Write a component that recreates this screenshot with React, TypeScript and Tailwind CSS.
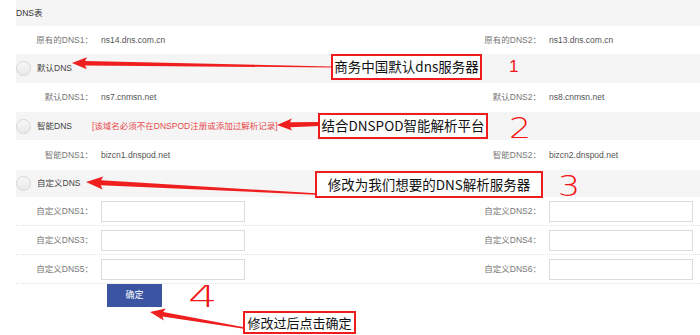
import React from "react";

const ui = { fontFamily: '"Liberation Sans", "Noto Sans CJK SC", sans-serif' };
const cjk = { fontFamily: '"Noto Sans CJK SC", "Liberation Sans", sans-serif' };

function arrow(tip: [number, number], tail: [number, number], L: number, W: number, w0: number, w1: number) {
  const dx = tail[0] - tip[0];
  const dy = tail[1] - tip[1];
  const len = Math.hypot(dx, dy);
  const ux = dx / len;
  const uy = dy / len;
  const nx = -uy;
  const ny = ux;
  const bx = tip[0] + ux * L;
  const by = tip[1] + uy * L;
  const p = (x: number, y: number) => `${x.toFixed(1)},${y.toFixed(1)}`;
  return [
    p(tip[0], tip[1]),
    p(bx + nx * W, by + ny * W),
    p(bx + nx * w0 * 0.5 - ux * 2, by + ny * w0 * 0.5 - uy * 2),
    p(tail[0] + nx * w1 * 0.5, tail[1] + ny * w1 * 0.5),
    p(tail[0] - nx * w1 * 0.5, tail[1] - ny * w1 * 0.5),
    p(bx - nx * w0 * 0.5 - ux * 2, by - ny * w0 * 0.5 - uy * 2),
    p(bx - nx * W, by - ny * W),
  ].join(" ");
}

function InfoRow({ l1, v1, l2, v2, h }: { l1: string; v1: string; l2: string; v2: string; h: string }) {
  return (
    <div className={`grid grid-cols-[85px_359px_89px_1fr] items-center bg-white text-[8.5px] ${h}`}>
      <span className="pr-[8px] text-right text-[#777]">{l1}</span>
      <span className="text-[#555]">{v1}</span>
      <span className="pr-[8px] text-right text-[#777]">{l2}</span>
      <span className="text-[#555]">{v2}</span>
    </div>
  );
}

function RadioRow({ label, h, children }: { label: string; h: string; children?: React.ReactNode }) {
  return (
    <div className={`flex items-center bg-[#f5f5f5] text-[8.5px] ${h}`}>
      <span className="h-[15px] w-[15px] rounded-full border border-[#d6d6d6] bg-gradient-to-b from-[#f7f7f7] to-[#e9e9e9]" />
      <span className="ml-[6px] text-[#444]">{label}</span>
      {children}
    </div>
  );
}

function InputRow({ l1, l2 }: { l1: string; l2: string }) {
  return (
    <div className="grid h-[29px] grid-cols-[85px_359px_89px_1fr] items-center border-b border-dotted border-[#e3e3e3] text-[8.5px]">
      <span className="pr-[8px] text-right text-[#777]">{l1}</span>
      <div className="h-[21px] w-[144px] border border-[#dcdcdc] bg-white" />
      <span className="pr-[8px] text-right text-[#777]">{l2}</span>
      <div className="h-[21px] w-[144px] border border-[#dcdcdc] bg-white" />
    </div>
  );
}

function Note({ text, cls }: { text: string; cls: string }) {
  return (
    <div
      className={`absolute flex items-center justify-center border-2 border-[#ee1c1c] bg-white leading-none text-[#111] ${cls}`}
      style={cjk}
    >
      {text}
    </div>
  );
}

function Digit({ d, cls }: { d: string; cls: string }) {
  return (
    <span
      className={`absolute origin-left font-extralight leading-none text-[#f31414] ${cls}`}
      style={{ fontFamily: '"DejaVu Sans", sans-serif' }}
    >
      {d}
    </span>
  );
}

export default function App() {
  return (
    <div className="relative h-[335px] w-[700px] overflow-hidden bg-white" style={ui}>
      <div className="ml-4">
        <div className="flex h-[26px] items-center bg-[#f5f5f5] text-[8.5px] text-[#333]">DNS表</div>
        <InfoRow l1="原有的DNS1：" v1="ns14.dns.com.cn" l2="原有的DNS2：" v2="ns13.dns.com.cn" h="h-[28px]" />
        <RadioRow label="默认DNS" h="h-[29px]" />
        <InfoRow l1="默认DNS1：" v1="ns7.cnmsn.net" l2="默认DNS2：" v2="ns8.cnmsn.net" h="h-[29px]" />
        <RadioRow label="智能DNS" h="h-[28px]">
          <span className="ml-[20px] text-[8.5px] text-[#e8474a]">[该域名必须不在DNSPOD注册或添加过解析记录]</span>
        </RadioRow>
        <InfoRow l1="智能DNS1：" v1="bizcn1.dnspod.net" l2="智能DNS2：" v2="bizcn2.dnspod.net" h="h-[30px]" />
        <RadioRow label="自定义DNS" h="h-[27px]" />
        <InputRow l1="自定义DNS1：" l2="自定义DNS2：" />
        <InputRow l1="自定义DNS3：" l2="自定义DNS4：" />
        <InputRow l1="自定义DNS5：" l2="自定义DNS6：" />
        <button
          type="button"
          className="ml-[91px] flex h-[23px] w-[55px] items-center justify-center bg-[#3b55a2] text-[9px] text-white"
        >
          确定
        </button>
      </div>

      <svg className="pointer-events-none absolute inset-0" width="700" height="335" viewBox="0 0 700 335">
        <polygon fill="#ef1f1f" points={arrow([72, 63], [331, 67], 15, 6, 4.5, 1)} />
        <polygon fill="#ef1f1f" points={arrow([277, 125], [319, 124], 15, 6, 5, 4)} />
        <polygon fill="#ef1f1f" points={arrow([86, 182], [316, 194], 17, 6.5, 5, 1.5)} />
        <polygon fill="#ef1f1f" points={arrow([150, 312], [244, 328], 15, 6, 4.5, 1.5)} />
      </svg>

      <Note text="商务中国默认dns服务器" cls="left-[331px] top-[54px] h-[26px] w-[151px] text-[13.5px]" />
      <Note text="结合DNSPOD智能解析平台" cls="left-[318px] top-[113px] h-[26px] w-[170px] text-[13.5px]" />
      <Note text="修改为我们想要的DNS解析服务器" cls="left-[315px] top-[171px] h-[27px] w-[228px] text-[13.5px]" />
      <Note text="修改过后点击确定" cls="left-[243px] top-[311px] h-[23px] w-[113px] text-[13px]" />

      <span
        className="absolute left-[509px] top-[58px] text-[17px] leading-none text-[#f31414]"
        style={{ fontFamily: '"Liberation Sans", sans-serif' }}
      >
        1
      </span>
      <Digit d="2" cls="left-[509px] top-[114px] scale-x-[1.2] text-[29px]" />
      <Digit d="3" cls="left-[558px] top-[172px] scale-x-[1.2] text-[29px]" />
      <Digit d="4" cls="left-[188px] top-[281px] scale-x-[1.5] text-[31px]" />
    </div>
  );
}
